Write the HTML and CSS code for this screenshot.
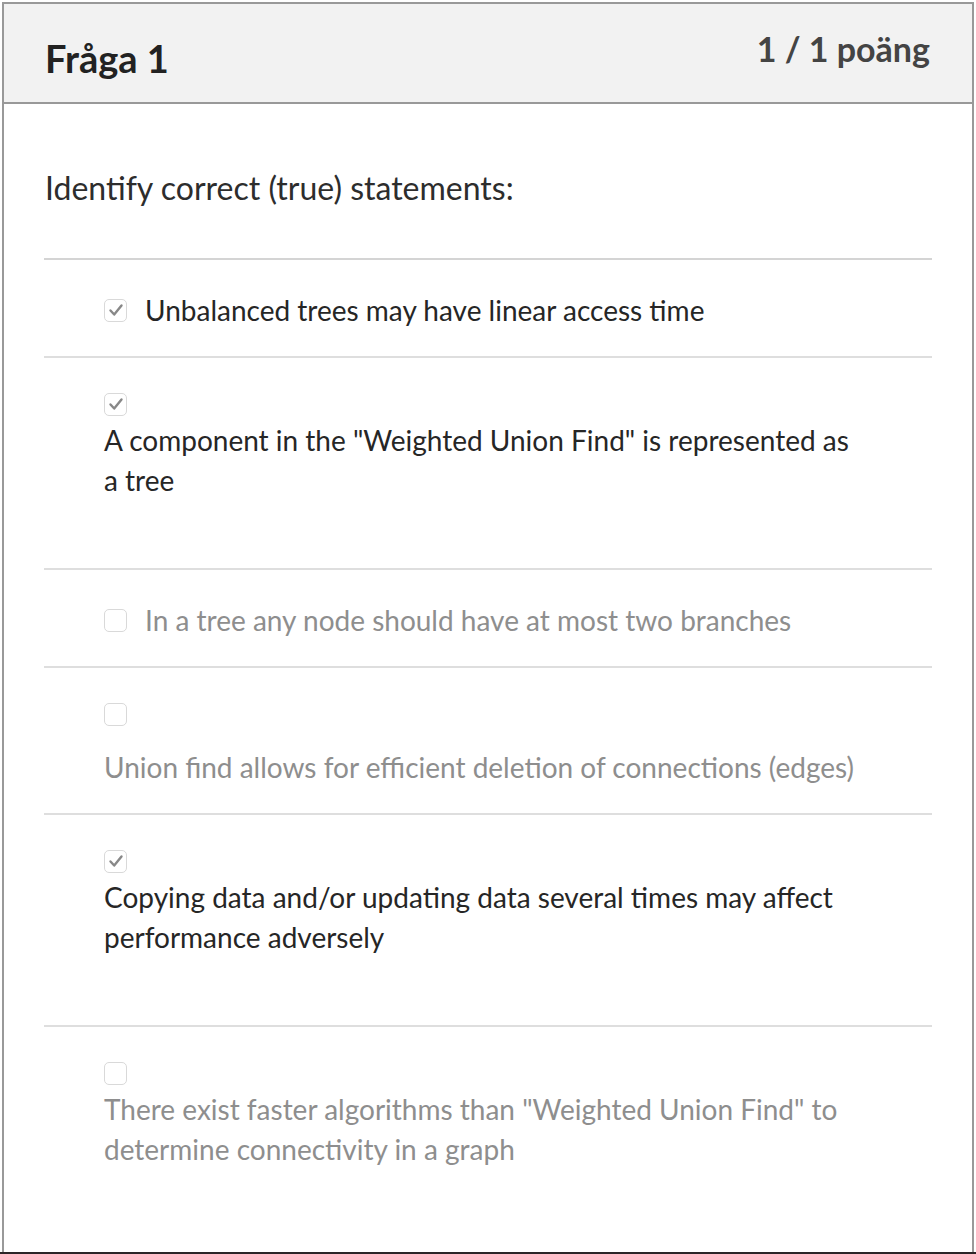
FILE: index.html
```html
<!DOCTYPE html>
<html lang="sv">
<head>
<meta charset="utf-8">
<title>Fråga 1</title>
<link rel="stylesheet" href="styles.css">
</head>
<body>
<div class="question">
  <div class="header">
    <h2 class="title">Fråga 1</h2>
    <div class="points">1 / 1 poäng</div>
  </div>
  <div class="content">
    <div class="prompt">Identify correct (true) statements:</div>
    <div class="answers">
      <div class="answer inline checked">
        <span class="box"><svg viewBox="0 0 20 20"><path d="M4.5 10.5 L8.2 14.5 L15.5 5.5"/></svg></span>
        <span class="label">Unbalanced trees may have linear access time</span>
      </div>
      <div class="answer block checked">
        <div class="boxline"><span class="box"><svg viewBox="0 0 20 20"><path d="M4.5 10.5 L8.2 14.5 L15.5 5.5"/></svg></span></div>
        <p class="label">A component in the "Weighted Union Find" is represented as a tree</p>
      </div>
      <div class="answer inline">
        <span class="box"></span>
        <span class="label">In a tree any node should have at most two branches</span>
      </div>
      <div class="answer block single">
        <div class="boxline"><span class="box"></span></div>
        <p class="label">Union find allows for efficient deletion of connections (edges)</p>
      </div>
      <div class="answer block checked">
        <div class="boxline"><span class="box"><svg viewBox="0 0 20 20"><path d="M4.5 10.5 L8.2 14.5 L15.5 5.5"/></svg></span></div>
        <p class="label">Copying data and/or updating data several times may affect performance adversely</p>
      </div>
      <div class="answer block last">
        <div class="boxline"><span class="box"></span></div>
        <p class="label">There exist faster algorithms than "Weighted Union Find" to determine connectivity in a graph</p>
      </div>
    </div>
  </div>
</div>
<div class="footer-strip"></div>
</body>
</html>
```

FILE: styles.css
```css
html, body {
  margin: 0;
  padding: 0;
  background: #ffffff;
}
body {
  font-family: Lato, "Noto Sans", sans-serif;
  color: #2d2d2d;
  width: 976px;
  height: 1254px;
  overflow: hidden;
}
.question {
  margin: 2px 2px 0 2px;
  border: 2px solid #999999;
  border-bottom: none;
  height: 1250px;
  box-sizing: border-box;
}
.header {
  background: #f2f2f2;
  border-bottom: 2px solid #999999;
  height: 100px;
  box-sizing: border-box;
  display: flex;
  justify-content: space-between;
  align-items: flex-start;
  padding: 0 42px 0 41px;
}
.title {
  margin: 0;
  font-size: 38px;
  font-weight: 700;
  line-height: 40px;
  padding-top: 34px;
  color: #222222;
}
.points {
  font-size: 34px;
  font-weight: 700;
  line-height: 34px;
  padding-top: 28px;
  color: #444444;
}
.content {
  padding: 0 40px 0 40px;
}
.prompt {
  font-size: 32px;
  line-height: 40px;
  padding: 64px 0 50px 1px;
  border-bottom: 2px solid #d4d4d4;
  color: #2d2d2d;
}
.answer {
  border-bottom: 2px solid #dedede;
  padding: 30px 40px 26px 60px;
  font-size: 28px;
  line-height: 40px;
}
.answer.last {
  border-bottom: none;
}
.answer.inline {
  display: flex;
  align-items: center;
  gap: 18px;
}
.answer .label {
  margin: 0;
  color: #8e8e8e;
}
.answer.checked .label {
  color: #262626;
}
.answer.block .label {
  padding-right: 30px;
}
.answer.block {
  padding-bottom: 68px;
}
.answer.block.single {
  padding-bottom: 26px;
}
.answer.block.single .label {
  margin-top: 17px;
}
.boxline {
  height: 32px;
  display: flex;
  align-items: center;
}
.box {
  width: 23px;
  height: 23px;
  box-sizing: border-box;
  border: 1.5px solid #d9d9d9;
  border-radius: 5px;
  background: #ffffff;
  display: inline-flex;
  align-items: center;
  justify-content: center;
  flex: none;
}
.box svg {
  width: 20px;
  height: 20px;
  flex: none;
  display: block;
}
.box svg path {
  fill: none;
  stroke: #888888;
  stroke-width: 2.4;
  stroke-linecap: round;
  stroke-linejoin: round;
}
.footer-strip {
  height: 2px;
  background: #2b2527;
}
```
